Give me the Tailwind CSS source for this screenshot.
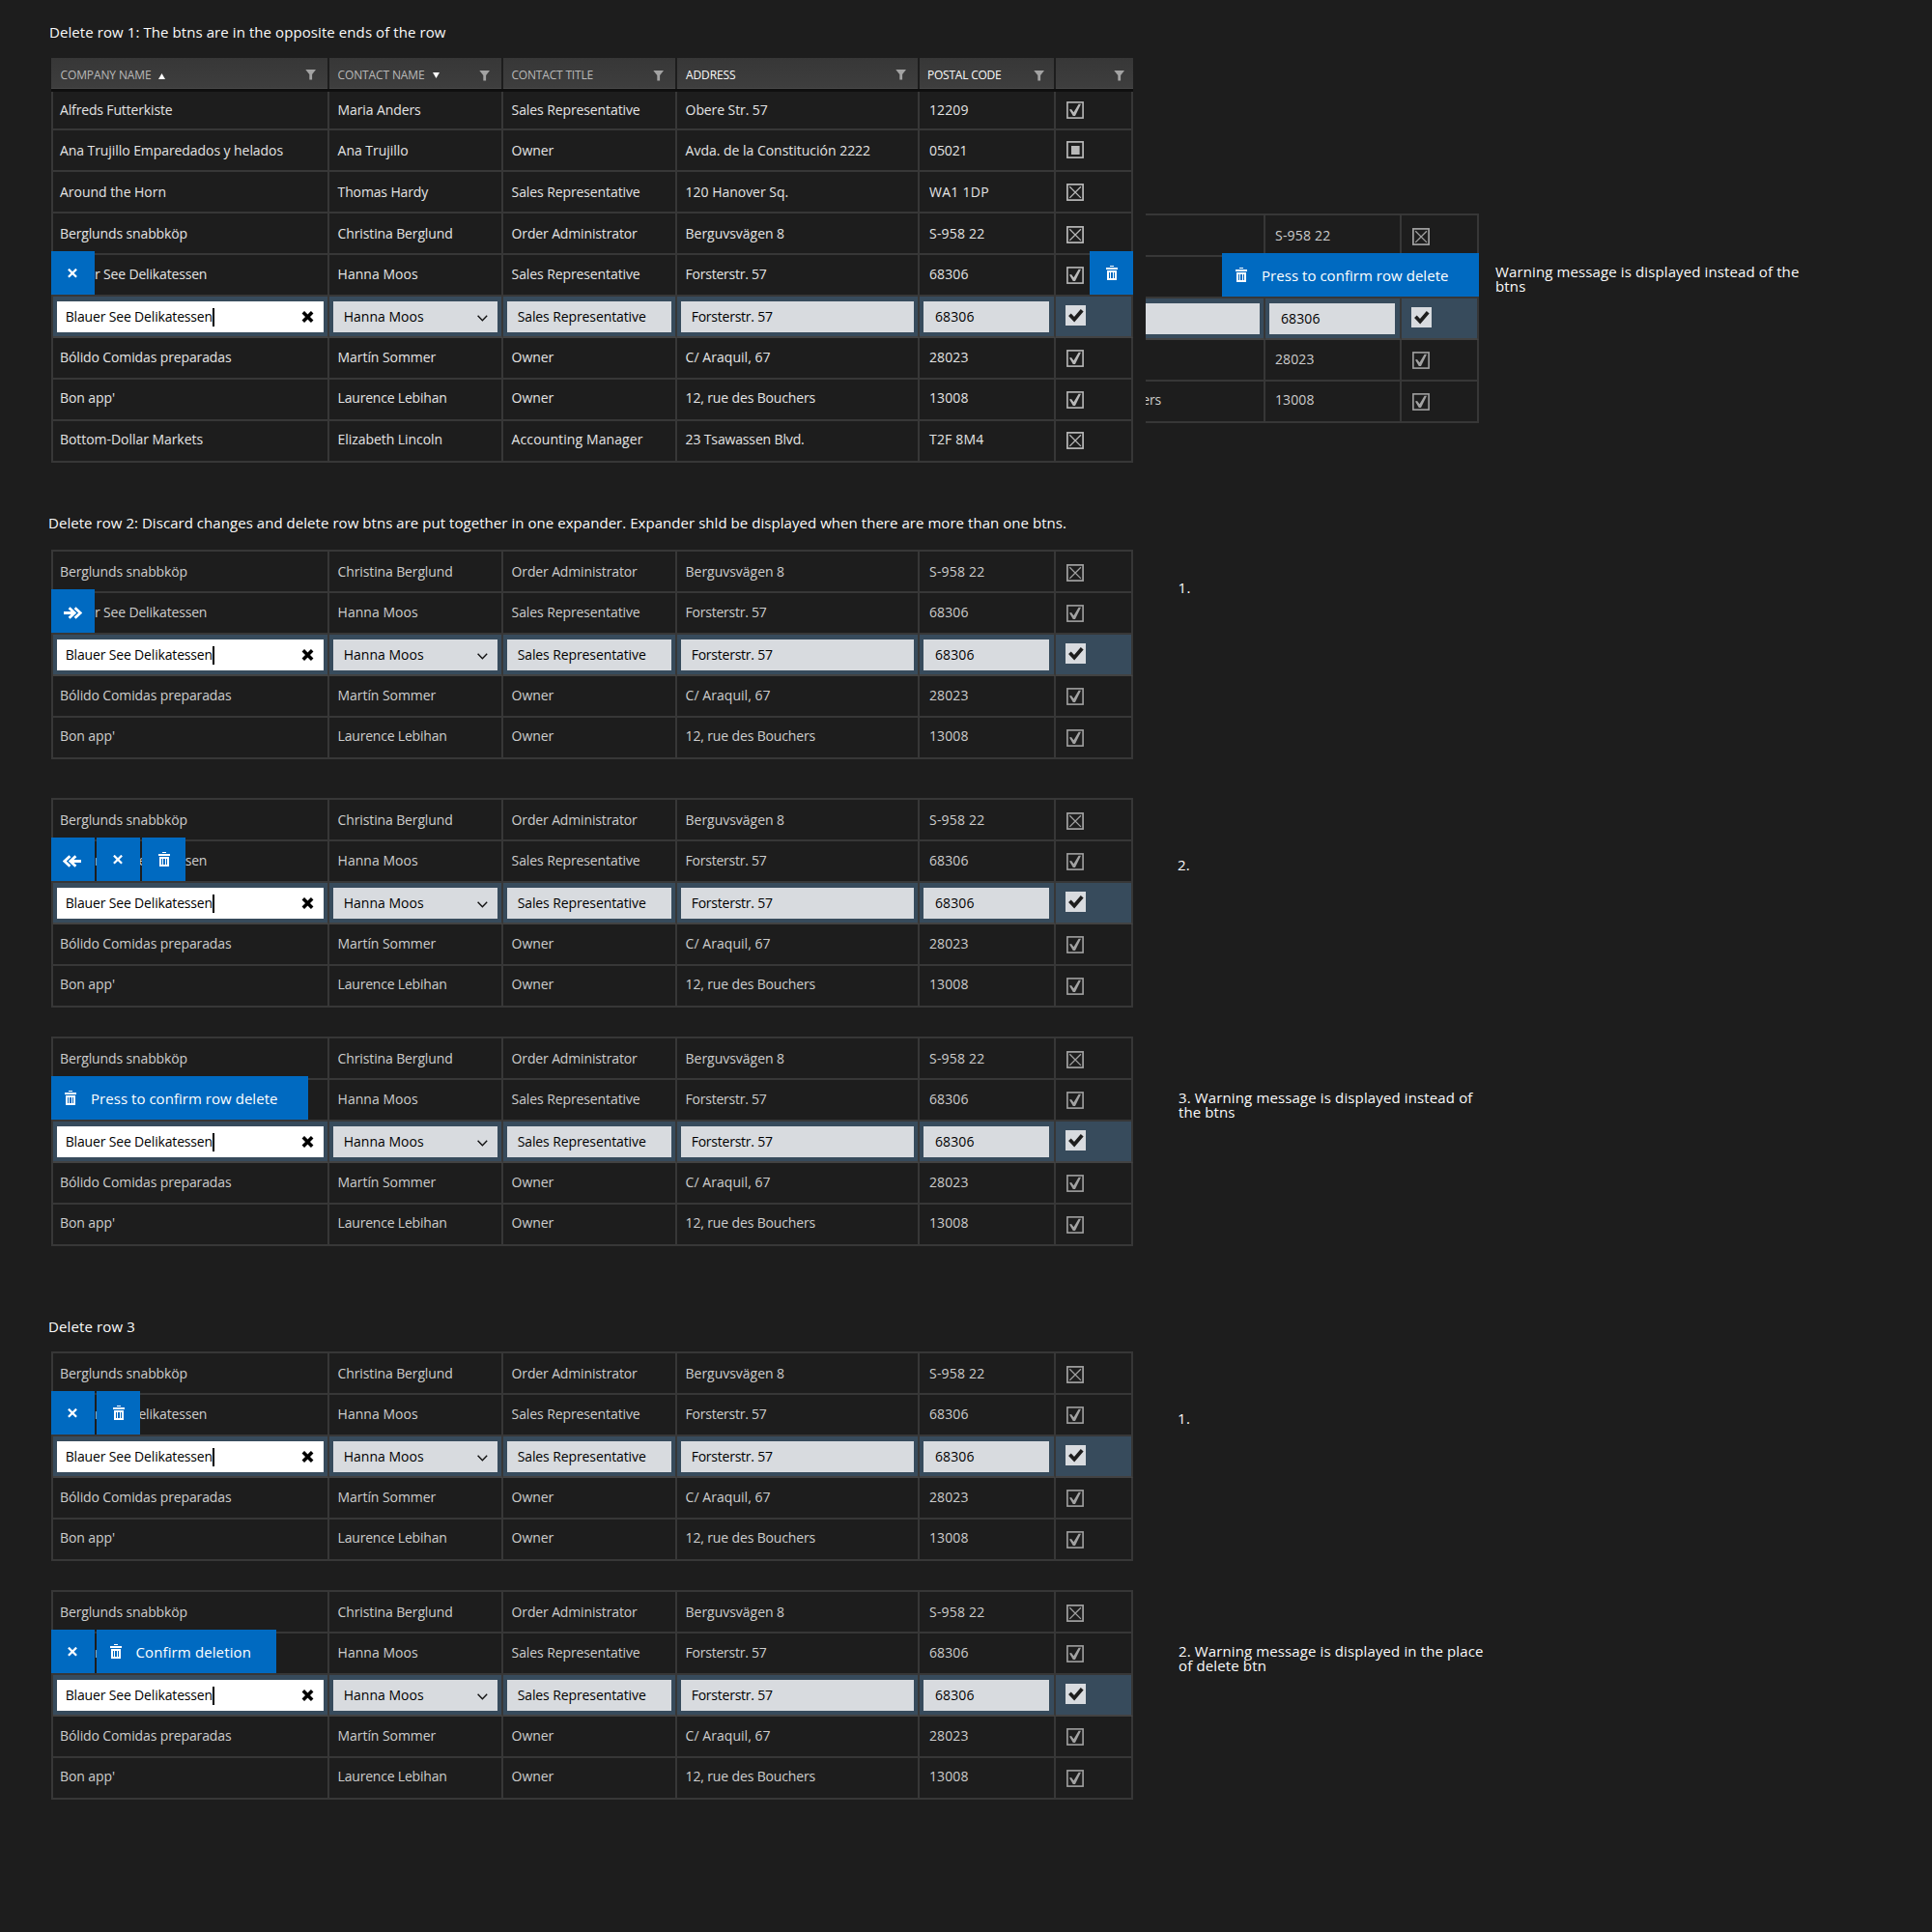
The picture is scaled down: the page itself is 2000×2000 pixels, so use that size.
<!DOCTYPE html>
<html lang="en">
<head>
<meta charset="utf-8">
<title>Delete row</title>
<script src="https://cdn.jsdelivr.net/npm/@tailwindcss/browser@4"></script>
</head>
<body class="bg-[#1d1d1d]">
<main id="app" class="flex h-[2000px] w-[2000px] flex-col overflow-hidden bg-[#1d1d1d] pl-[53px] pt-[23px] font-['Open_Sans','Noto_Sans',sans-serif] text-[15px] whitespace-nowrap text-[#fafafa]"></main>

<script>
const icons = {
  filter: '<svg class="block" width="11" height="11" viewBox="0 0 11 11"><path d="M.3 0H11L7.1 5v5.4H4.3V5z" fill="#a3a3a3"/></svg>',
  up: '<svg class="block" width="7" height="6" viewBox="0 0 7 6"><path d="M3.5 0 7 6H0z" fill="#fff"/></svg>',
  down: '<svg class="block" width="7" height="6" viewBox="0 0 7 6"><path d="M3.5 6 7 0H0z" fill="#fff"/></svg>',
  on: '<svg class="block" width="18" height="18" viewBox="0 0 18 18"><rect x=".9" y=".9" width="16.2" height="16.2" fill="none" stroke="currentColor" stroke-width="1.6"/><path d="M3 8.6 5 8l2.5 3.2 5.1-8.4H15L9 15.1H6.8z" fill="currentColor"/></svg>',
  off: '<svg class="block" width="18" height="18" viewBox="0 0 18 18"><rect x=".9" y=".9" width="16.2" height="16.2" fill="none" stroke="currentColor" stroke-width="1.7"/><path d="M3.3 3.3l11.6 11.6M14.9 3.3 3.3 14.9" fill="none" stroke="currentColor" stroke-width="1.3"/></svg>',
  mixed: '<svg class="block" width="18" height="18" viewBox="0 0 18 18"><rect x=".9" y=".9" width="16.2" height="16.2" fill="none" stroke="currentColor" stroke-width="1.7"/><rect x="5" y="5" width="8.6" height="9" fill="currentColor"/></svg>',
  tick: '<svg class="block" width="21" height="21" viewBox="0 0 21 21"><path d="M4.4 9.8 9.1 14.8 17.2 5.2" fill="none" stroke="#1d1d1d" stroke-width="3.7"/></svg>',
  clear: '<svg class="block" width="13" height="12" viewBox="0 0 13 12"><path d="M1.8 1.2l9.4 9.6M11.2 1.2 1.8 10.8" stroke="#000" stroke-width="3.5"/></svg>',
  chevron: '<svg class="block" width="11" height="7" viewBox="0 0 11 7"><path d="M.6.8l4.8 4.9L10.2.8" fill="none" stroke="#111" stroke-width="1.4"/></svg>',
  discard: '<svg class="block" width="10" height="10" viewBox="0 0 10 10"><path d="M.9.6l8.2 8.2M9.1.6.9 8.8" stroke="#fff" stroke-width="2.2"/></svg>',
  trash: '<svg class="block" width="12" height="15" viewBox="0 0 12 15" shape-rendering="crispEdges"><path fill="#fff" fill-rule="evenodd" d="M4 0h4v1H4zM0 2h12v2H0zM1 5h10v10H1zM3 7v6h1V7zM5 7v6h2V7zM8 7v6h1V7z"/></svg>',
  expand: '<svg class="block" width="19" height="13" viewBox="0 0 19 13"><path d="M0 6.5h10M5.6 1.2l5.6 5.3-5.6 5.3M11.6 1.2l5.6 5.3-5.6 5.3" fill="none" stroke="#fff" stroke-width="2.8"/></svg>',
  collapse: '<svg class="block" width="19" height="13" viewBox="0 0 19 13"><path d="M19 6.5H9M13.4 1.2 7.8 6.5l5.6 5.3M7.4 1.2 1.8 6.5l5.6 5.3" fill="none" stroke="#fff" stroke-width="2.8"/></svg>'
};

// A run of text tracked so that it fills a given advance width
const pen = document.createElement('canvas').getContext('2d');
const t = (text, w, size = 14) => {
  if (!text) return '';
  pen.font = `${size}px "Open Sans"`;
  const gap = (w - pen.measureText(text).width) / text.length;
  return `<span style="letter-spacing:${gap.toFixed(3)}px">${text}</span>`;
};

const widths = {
  'Alfreds Futterkiste': 116.5, 'Ana Trujillo Emparedados y helados': 231, 'Around the Horn': 110,
  'Berglunds snabbköp': 132, 'Blauer See Delikatessen': 152.3, 'Bólido Comidas preparadas': 177.5, "Bon app'": 57,
  'Bottom-Dollar Markets': 148, 'Maria Anders': 86, 'Ana Trujillo': 73, 'Thomas Hardy': 93.5, 'Christina Berglund': 119,
  'Hanna Moos': 83, 'Martín Sommer': 101.5, 'Laurence Lebihan': 113, 'Elizabeth Lincoln': 108.5,
  'Sales Representative': 133, 'Owner': 43.5, 'Order Administrator': 130, 'Accounting Manager': 136,
  'Obere Str. 57': 85, 'Avda. de la Constitución 2222': 191.5, '120 Hanover Sq.': 106.5, 'Berguvsvägen 8': 102.5,
  'Forsterstr. 57': 84, 'C/ Araquil, 67': 88, '12, rue des Bouchers': 134.5, '23 Tsawassen Blvd.': 123,
  '12209': 40.5, '05021': 39.5, 'WA1 1DP': 62, 'S-958 22': 57.5, '68306': 40.5, '28023': 40.5, '13008': 40.5, 'T2F 8M4': 56.5
};

const rows = [
  ['Alfreds Futterkiste', 'Maria Anders', 'Sales Representative', 'Obere Str. 57', '12209', 'on', 'pt-[12px]', 'pt-[13px]'],
  ['Ana Trujillo Emparedados y helados', 'Ana Trujillo', 'Owner', 'Avda. de la Constitución 2222', '05021', 'mixed', 'pt-[11px]', 'pt-[11px]'],
  ['Around the Horn', 'Thomas Hardy', 'Sales Representative', '120 Hanover Sq.', 'WA1 1DP', 'off', 'pt-[11px]', 'pt-[12px]'],
  ['Berglunds snabbköp', 'Christina Berglund', 'Order Administrator', 'Berguvsvägen 8', 'S-958 22', 'off', 'pt-[11px]', 'pt-[13px]'],
  ['Blauer See Delikatessen', 'Hanna Moos', 'Sales Representative', 'Forsterstr. 57', '68306', 'on', 'pt-[10px]', 'pt-[12px]'],
  ['Blauer See Delikatessen', 'Hanna Moos', 'Sales Representative', 'Forsterstr. 57', '68306', 'edit'],
  ['Bólido Comidas preparadas', 'Martín Sommer', 'Owner', 'C/ Araquil, 67', '28023', 'on', 'pt-[10px]', 'pt-[12px]'],
  ["Bon app'", 'Laurence Lebihan', 'Owner', '12, rue des Bouchers', '13008', 'on', 'pt-[9px]', 'pt-[12px]'],
  ['Bottom-Dollar Markets', 'Elizabeth Lincoln', 'Accounting Manager', '23 Tsawassen Blvd.', 'T2F 8M4', 'off', 'pt-[9px]', 'pt-[11px]']
];
const recordRows = rows.slice(3, 8);
// The cropped view shows only the last columns
const croppedRows = recordRows.map(r => r.map((c, i) => i < 4 && c !== '12, rue des Bouchers' ? '' : c));

const insets = ['pl-[7px]', 'pl-[8.6px]', 'pl-[8.6px]', 'pl-[8.6px]', 'pl-[10px]'];
const grid = 'grid h-[43px] grid-cols-[286px_180px_180px_251px_141px_80px]';

const row = r => r[5] === 'edit' ? editRow(r) : `
  <div class="${grid}">
    ${r.slice(0, 5).map((c, i) => `<div class="border-r-2 border-b-2 border-[#373737] ${insets[i]} ${r[6]}">${t(c, widths[c])}</div>`).join('')}
    <div class="border-r-2 border-b-2 border-[#373737] pl-[11px] text-(--box) ${r[7]}">${icons[r[5]]}</div>
  </div>`;

const editCell = (inner, look, pad) => `
  <div class="border-r-2 border-b-2 border-r-[#373737] border-b-[#424242] bg-[#374b5c] px-1 pt-[5px]">
    <div class="flex h-8 ${look} ${pad} text-black">${inner}</div>
  </div>`;
const value = c => `<div class="pt-[6px]">${t(c, widths[c])}</div>`;

const editRow = r => `
  <div class="${grid}">
    ${editCell(`${value(r[0])}<div class="mt-[7px] h-[19px] w-[2px] bg-black"></div><div class="mt-[10px] mr-[10px] ml-auto">${icons.clear}</div>`, 'bg-white', 'pl-[8.7px]')}
    ${editCell(`${value(r[1])}<div class="mt-[14px] mr-[10px] ml-auto">${icons.chevron}</div>`, 'bg-[#d8dbdf]', 'pl-[10.7px]')}
    ${editCell(value(r[2]), 'bg-[#d8dbdf]', 'pl-[10.7px]')}
    ${editCell(value(r[3]), 'bg-[#d8dbdf]', 'pl-[10.7px]')}
    ${editCell(value(r[4]), 'mr-px bg-[#d8dbdf]', 'pl-[12px]')}
    <div class="border-r-2 border-b-2 border-r-[#373737] border-b-[#424242] bg-[#374b5c] pt-[9px] pl-[10px]"><div class="size-[21px] bg-[#d8dbdf]">${icons.tick}</div></div>
  </div>`;

const btn = {
  discard: `<div class="size-[45px] bg-[#006ac1] pt-[18px] pl-[17px]">${icons.discard}</div>`,
  trash: `<div class="size-[45px] bg-[#006ac1] pt-[15px] pl-[17px]">${icons.trash}</div>`,
  expand: `<div class="size-[45px] bg-[#006ac1] pt-[18px] pl-[13px]">${icons.expand}</div>`,
  collapse: `<div class="size-[45px] bg-[#006ac1] pt-[18px] pl-[12px]">${icons.collapse}</div>`,
  press: `<div class="flex h-[45px] w-[266px] bg-[#006ac1] pt-[15px] pl-[14px] text-[15px] leading-5 text-white">${icons.trash}<div class="-mt-[2px] ml-[15px]">${t('Press to confirm row delete', 193.5, 15)}</div></div>`,
  confirm: `<div class="flex h-[45px] w-[186px] bg-[#006ac1] pt-[15px] pl-[14px] text-[15px] leading-5 text-white">${icons.trash}<div class="-mt-[2px] ml-[14.5px]">${t('Confirm deletion', 119.5, 15)}</div></div>`
};
const bar = (names, place) => `<div class="absolute flex gap-[2px] ${place}">${names.map(n => btn[n]).join('')}</div>`;

const head = (label, w, tone, pad, sort, drop) => `
  <div class="flex h-8 border-b border-[#494949] bg-linear-to-b from-[#373737] to-[#3e3e3e] ${pad} ${tone}">
    <div class="pt-[11px] text-[12px] leading-[14px]">${t(label, w, 12)}</div>${sort}
    <div class="ml-auto ${drop}">${icons.filter}</div>
  </div>`;

const fullTable = `
  <div class="relative w-[1120px]">
    <div class="grid grid-cols-[286px_178px_178px_249px_139px_80px] gap-x-[2px]">
      ${head('COMPANY NAME', 94, 'text-[#b9b9b9]', 'pl-[9.5px] pr-[12px]', `<div class="mt-[16px] ml-[7px]">${icons.up}</div>`, 'pt-[12px]')}
      ${head('CONTACT NAME', 90, 'text-[#b9b9b9]', 'pl-[8.5px] pr-[12px]', `<div class="mt-[15px] ml-[8px]">${icons.down}</div>`, 'pt-[13px]')}
      ${head('CONTACT TITLE', 84.5, 'text-[#b9b9b9]', 'pl-[8.5px] pr-[12px]', '', 'pt-[13px]')}
      ${head('ADDRESS', 51.5, 'text-[#fafafa]', 'pl-[9px] pr-[12px]', '', 'pt-[12px]')}
      ${head('POSTAL CODE', 76.5, 'text-[#fafafa]', 'pl-[8px] pr-[10px]', '', 'pt-[13px]')}
      <div class="flex h-8 justify-end border-b border-[#494949] bg-linear-to-b from-[#373737] to-[#3e3e3e] pt-[13px] pr-[9px]">${icons.filter}</div>
    </div>
    <div class="border-l-2 border-[#373737] text-[14px] leading-5 text-[#e4e4e4] [--box:#b9b9b9]">${rows.map(row).join('')}</div>
    <div class="absolute top-8 left-0 h-[3px] w-full bg-[#0f0f0f]"></div>
    ${bar(['discard'], 'left-0 top-[200px]')}${bar(['trash'], 'right-0 top-[200px]')}
  </div>`;

const compactTable = (actions, records = recordRows) => `
  <div class="relative w-[1120px] shrink-0 border-t-2 border-l-2 border-[#373737] text-[14px] leading-5 text-[#cdcdcd] [--box:#a2a2a2]">
    ${records.map(row).join('')}${actions}
  </div>`;

const note = (lines, pad) => `<div class="text-[15px] leading-[15px] ${pad}">${lines.map(([s, w]) => `<div>${t(s, w, 15)}</div>`).join('')}</div>`;
const left = names => bar(names, '-left-[2px] top-[39px]');
const heading = (s, w, pos) => `<h2 class="h-5 text-[15px] leading-5 ${pos}">${t(s, w, 15)}</h2>`;

document.getElementById('app').innerHTML = `
  ${heading('Delete row 1: The btns are in the opposite ends of the row', 410.5, '-ml-[2px]')}
  <section class="mt-[17px] flex h-[419px]">
    ${fullTable}
    <div class="mt-[161px] ml-[13px] flex h-[217px] w-[345px] justify-end overflow-hidden">${compactTable(bar(['press'], 'right-0 top-[39px]'), croppedRows)}</div>
    <div class="mt-[161px] ml-[17px]">${note([['Warning message is displayed instead of the', 314.5], ['btns', 31.5]], 'pt-[53px]')}</div>
  </section>
  ${heading('Delete row 2: Discard changes and delete row btns are put together in one expander. Expander shld be displayed when there are more than one btns.', 1054, '-ml-[3px] mt-[52px]')}
  <section class="mt-[18px] flex">${compactTable(left(['expand']))}${note([['1.', 13.5]], 'pt-[32px] pl-[46.5px]')}</section>
  <section class="mt-[40px] flex">${compactTable(left(['collapse', 'discard', 'trash']))}${note([['2.', 13]], 'pt-[62px] pl-[46px]')}</section>
  <section class="mt-[30px] flex">${compactTable(left(['press']))}${note([['3. Warning message is displayed instead of', 304.5], ['the btns', 58.5]], 'pt-[56px] pl-[47px]')}</section>
  ${heading('Delete row 3', 90, '-ml-[3px] mt-[73px]')}
  <section class="mt-[16px] flex">${compactTable(left(['discard', 'trash']))}${note([['1.', 13.5]], 'pt-[62px] pl-[46px]')}</section>
  <section class="mt-[30px] flex">${compactTable(left(['discard', 'confirm']))}${note([['2. Warning message is displayed in the place', 315.5], ['of delete btn', 91]], 'pt-[56px] pl-[47px]')}</section>`;
</script>
</body>
</html>
